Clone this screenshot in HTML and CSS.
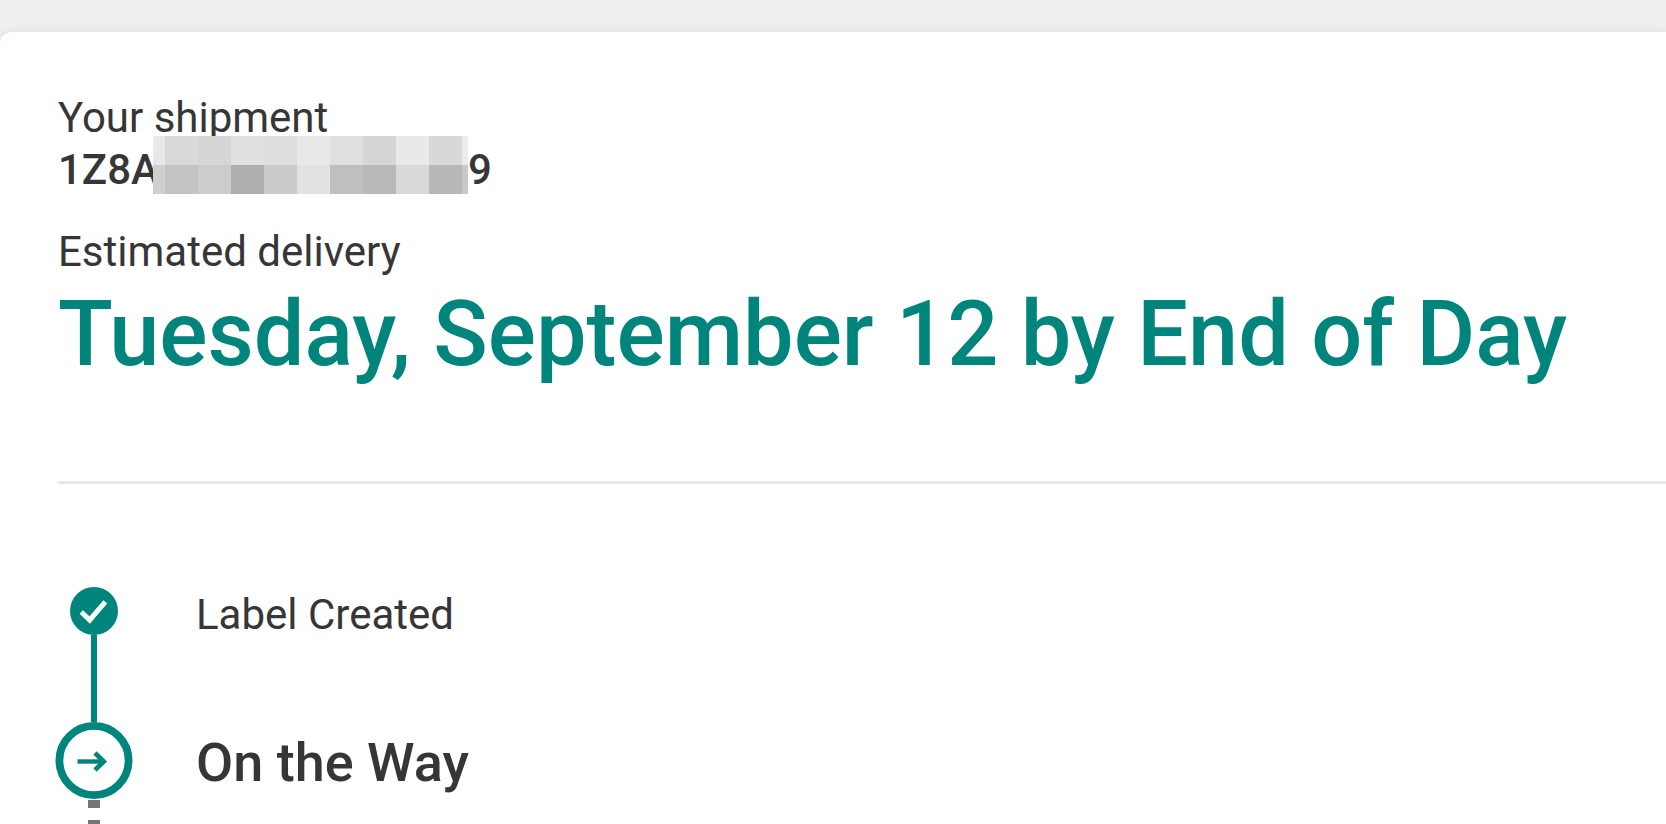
FILE: index.html
```html
<!DOCTYPE html>
<html lang="en">
<head>
    <meta charset="UTF-8">
    <meta name="viewport" content="width=device-width, initial-scale=1.0">
    <title>Track Shipment</title>
    <link rel="stylesheet" href="styles.css">
</head>
<body>
    <main class="card">
        <section class="summary">
            <div class="label">Your shipment</div>
            <div class="tracking-number">
                <span>1Z8A</span>
                <svg class="redacted" width="315" height="58" viewBox="0 0 315 58" shape-rendering="crispEdges" aria-hidden="true">
                    <rect x="0" y="0" width="12" height="29" fill="#e9e9e9"/>
                    <rect x="12" y="0" width="33" height="29" fill="#d9d9d9"/>
                    <rect x="45" y="0" width="33" height="29" fill="#d5d5d5"/>
                    <rect x="78" y="0" width="33" height="29" fill="#e0e0e0"/>
                    <rect x="111" y="0" width="33" height="29" fill="#dddddd"/>
                    <rect x="144" y="0" width="33" height="29" fill="#e8e8e8"/>
                    <rect x="177" y="0" width="33" height="29" fill="#e0e0e0"/>
                    <rect x="210" y="0" width="33" height="29" fill="#d6d6d6"/>
                    <rect x="243" y="0" width="33" height="29" fill="#e9e9e9"/>
                    <rect x="276" y="0" width="33" height="29" fill="#d8d8d8"/>
                    <rect x="309" y="0" width="6" height="29" fill="#ececec"/>
                    <rect x="0" y="29" width="12" height="29" fill="#cfcfcf"/>
                    <rect x="12" y="29" width="33" height="29" fill="#c3c3c3"/>
                    <rect x="45" y="29" width="33" height="29" fill="#cccccc"/>
                    <rect x="78" y="29" width="33" height="29" fill="#afafaf"/>
                    <rect x="111" y="29" width="33" height="29" fill="#cbcbcb"/>
                    <rect x="144" y="29" width="33" height="29" fill="#e2e2e2"/>
                    <rect x="177" y="29" width="33" height="29" fill="#bfbfbf"/>
                    <rect x="210" y="29" width="33" height="29" fill="#b9b9b9"/>
                    <rect x="243" y="29" width="33" height="29" fill="#d9d9d9"/>
                    <rect x="276" y="29" width="33" height="29" fill="#b8b8b8"/>
                    <rect x="309" y="29" width="6" height="29" fill="#c8c8c8"/>
                </svg>
                <span>9</span>
            </div>
            <div class="label">Estimated delivery</div>
            <h1>Tuesday, September 12 by End of Day</h1>
        </section>

        <ol class="steps">
            <li class="step done">
                <div class="marker">
                    <svg width="48" height="48" viewBox="0 0 48 48" aria-hidden="true">
                        <circle cx="24" cy="24" r="24" fill="#00857d"/>
                        <path d="M11.3 25 19.7 33 35.3 14.8" fill="none" stroke="#fff" stroke-width="5"/>
                    </svg>
                    <div class="line"></div>
                </div>
                <div class="step-text">Label Created</div>
            </li>
            <li class="step current">
                <div class="marker">
                    <svg width="78" height="78" viewBox="0 0 78 78" aria-hidden="true">
                        <circle cx="39" cy="38.5" r="34.6" fill="#fff" stroke="#00857d" stroke-width="7.8"/>
                        <path d="M22.5 39.5H49" fill="none" stroke="#00857d" stroke-width="4.4"/>
                        <path d="M40 31 48.8 39.5 40 48" fill="none" stroke="#00857d" stroke-width="4.6"/>
                    </svg>
                    <div class="line"></div>
                </div>
                <div class="step-text">On the Way</div>
            </li>
        </ol>
    </main>
</body>
</html>
```

FILE: styles.css
```css
* {
    box-sizing: border-box;
}

body {
    font-family: Roboto, Arial, sans-serif;
    font-size: 42px;
    line-height: 52px;
    color: #363636;
    margin: 0;
    padding-top: 32px;
    background-color: #efefef;
}

.card {
    display: flex;
    flex-direction: column;
    min-height: calc(100vh - 32px);
    padding: 60px 0 0 58px;
    background-color: white;
    border-radius: 12px 0 0 0;
    box-shadow: 0 0 10px rgba(0,0,0,0.08);
}

.summary {
    padding-bottom: 89px;
    border-bottom: 3px solid #e8e8e8;
}

.tracking-number {
    display: flex;
    align-items: flex-start;
    height: 52px;
    margin-bottom: 30px;
    font-weight: 500;
}

/* the strip covers the end of the last visible letter */
.redacted {
    flex-shrink: 0;
    margin: -8px 0 0 -6px;
}

h1 {
    margin: 0;
    font-size: 90px;
    line-height: 114px;
    font-weight: 500;
    color: #00857d;
}

.steps {
    display: flex;
    flex-direction: column;
    flex-grow: 1;
    list-style: none;
    margin: 103px 0 0;
    padding: 0;
}

.step {
    display: flex;
    gap: 66px;
}

.marker {
    display: flex;
    flex-direction: column;
    align-items: center;
    width: 72px;
}

.marker svg {
    flex-shrink: 0;
}

.done .line {
    width: 6px;
    height: 87px;
    background-color: #00857d;
}

.done .step-text {
    padding-top: 2px;
}

.current {
    flex-grow: 1;
}

.current .line {
    flex-grow: 1;
    width: 12px;
    background: repeating-linear-gradient(#757575 0 8px, white 8px 20px);
}

.current .step-text {
    padding-top: 9px;
    font-size: 54px;
    line-height: 64px;
    font-weight: 500;
}
```
